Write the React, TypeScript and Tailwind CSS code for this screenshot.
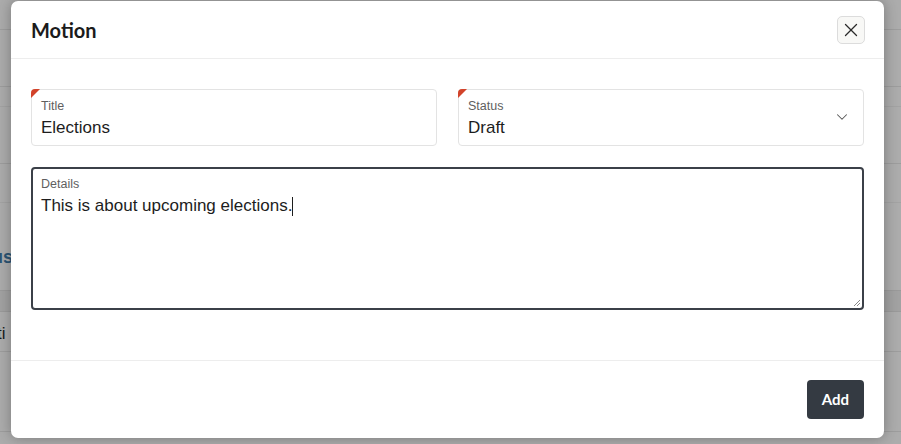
import { X, ChevronDown } from "lucide-react"

const sans = { fontFamily: '"Liberation Sans", Arial, sans-serif' }

function Backdrop() {
  return (
    <div className="flex flex-col h-[444px] bg-[#acacac]" style={sans}>
      <div className="h-[30px] border-b border-[#9d9d9d]" />
      <div className="h-[57px] border-b border-[#9d9d9d]" />
      <div className="h-[20px] border-b border-[#a3a3a3]" />
      <div className="h-[57px] border-b border-[#9d9d9d]" />
      <div className="h-[39px] border-b border-[#a3a3a3]" />
      <div className="h-[87px] flex items-center text-[18px] font-bold text-[#2c5473]">
        <span className="-ml-[8px] pt-[22px]">us</span>
      </div>
      <div className="h-[22px] bg-[#a2a2a2] border-y border-[#9a9a9a]" />
      <div className="h-[40px] flex items-center text-[17px] text-[#1a1a1a] border-b border-[#9d9d9d]">
        <span className="-ml-[3px] pt-[4px]">ti</span>
      </div>
      <div className="h-[80px] border-b border-[#9d9d9d]" />
      <div className="flex-1" />
    </div>
  )
}

function Field({ label, value, select }: { label: string; value: string; select?: boolean }) {
  return (
    <div className="relative flex-1 h-[57px] border border-[#e3e3e3] rounded-[4px] bg-white px-[9px] pt-[9px]">
      <div className="absolute -top-px -left-px w-0 h-0 border-t-[9px] border-r-[9px] border-t-[#d2432a] border-r-transparent rounded-tl-[4px]" />
      <div className="text-[12.5px] leading-[15px] text-[#5f5f5f]">{label}</div>
      <div className="text-[17px] leading-[22px] text-[#1d1d1d] mt-[3px]">{value}</div>
      {select && (
        <ChevronDown className="absolute right-[12px] top-[18px] text-[#555]" size={18} strokeWidth={1.4} />
      )}
    </div>
  )
}

export default function App() {
  return (
    <div className="relative w-[901px] h-[444px] overflow-hidden">
      <Backdrop />
      <div className="absolute left-[11px] top-[1px] w-[873px] h-[437px] bg-white rounded-[7px] shadow-[0_0_14px_rgba(0,0,0,0.3)] flex flex-col" style={sans}>
        <div className="h-[58px] flex items-center justify-between px-[20px] border-b border-[#ededed]">
          <h1 className="text-[20px] font-bold text-[#1b1b1b]" style={{ fontFamily: 'Lato, "Noto Sans", sans-serif' }}>Motion</h1>
          <button className="w-[28px] h-[28px] flex items-center justify-center bg-[#f8f8f6] border border-[#dcdcdc] rounded-[5px] mr-[-1px]">
            <X size={22} strokeWidth={1.4} className="text-[#2a2a2a]" />
          </button>
        </div>
        <div className="px-[20px] pt-[30px] pb-[50px] flex flex-col gap-[21px] border-b border-[#ededed]">
          <div className="flex gap-[21px]">
            <Field label="Title" value="Elections" />
            <Field label="Status" value="Draft" select />
          </div>
          <div className="relative h-[143px] border-2 border-[#3b4048] rounded-[4px] px-[8px] pt-[8px]">
            <div className="text-[12.5px] leading-[15px] text-[#5f5f5f]">Details</div>
            <div className="text-[17px] leading-[22px] text-[#1d1d1d] mt-[3px] flex items-center">
              This is about upcoming elections.<span className="inline-block w-px h-[19px] bg-[#1d1d1d]" />
            </div>
            <svg className="absolute right-[1px] bottom-[1px]" width="9" height="9" viewBox="0 0 9 9">
              <path d="M8 2 L2 8 M8 5 L5 8" stroke="#888" strokeWidth="1" />
            </svg>
          </div>
        </div>
        <div className="flex-1 flex items-center justify-end px-[20px]">
          <button className="w-[57px] h-[39px] bg-[#343a42] text-white text-[15px] font-bold rounded-[4px]" style={{ fontFamily: 'Lato, "Noto Sans", sans-serif' }}>
            Add
          </button>
        </div>
      </div>
    </div>
  )
}
